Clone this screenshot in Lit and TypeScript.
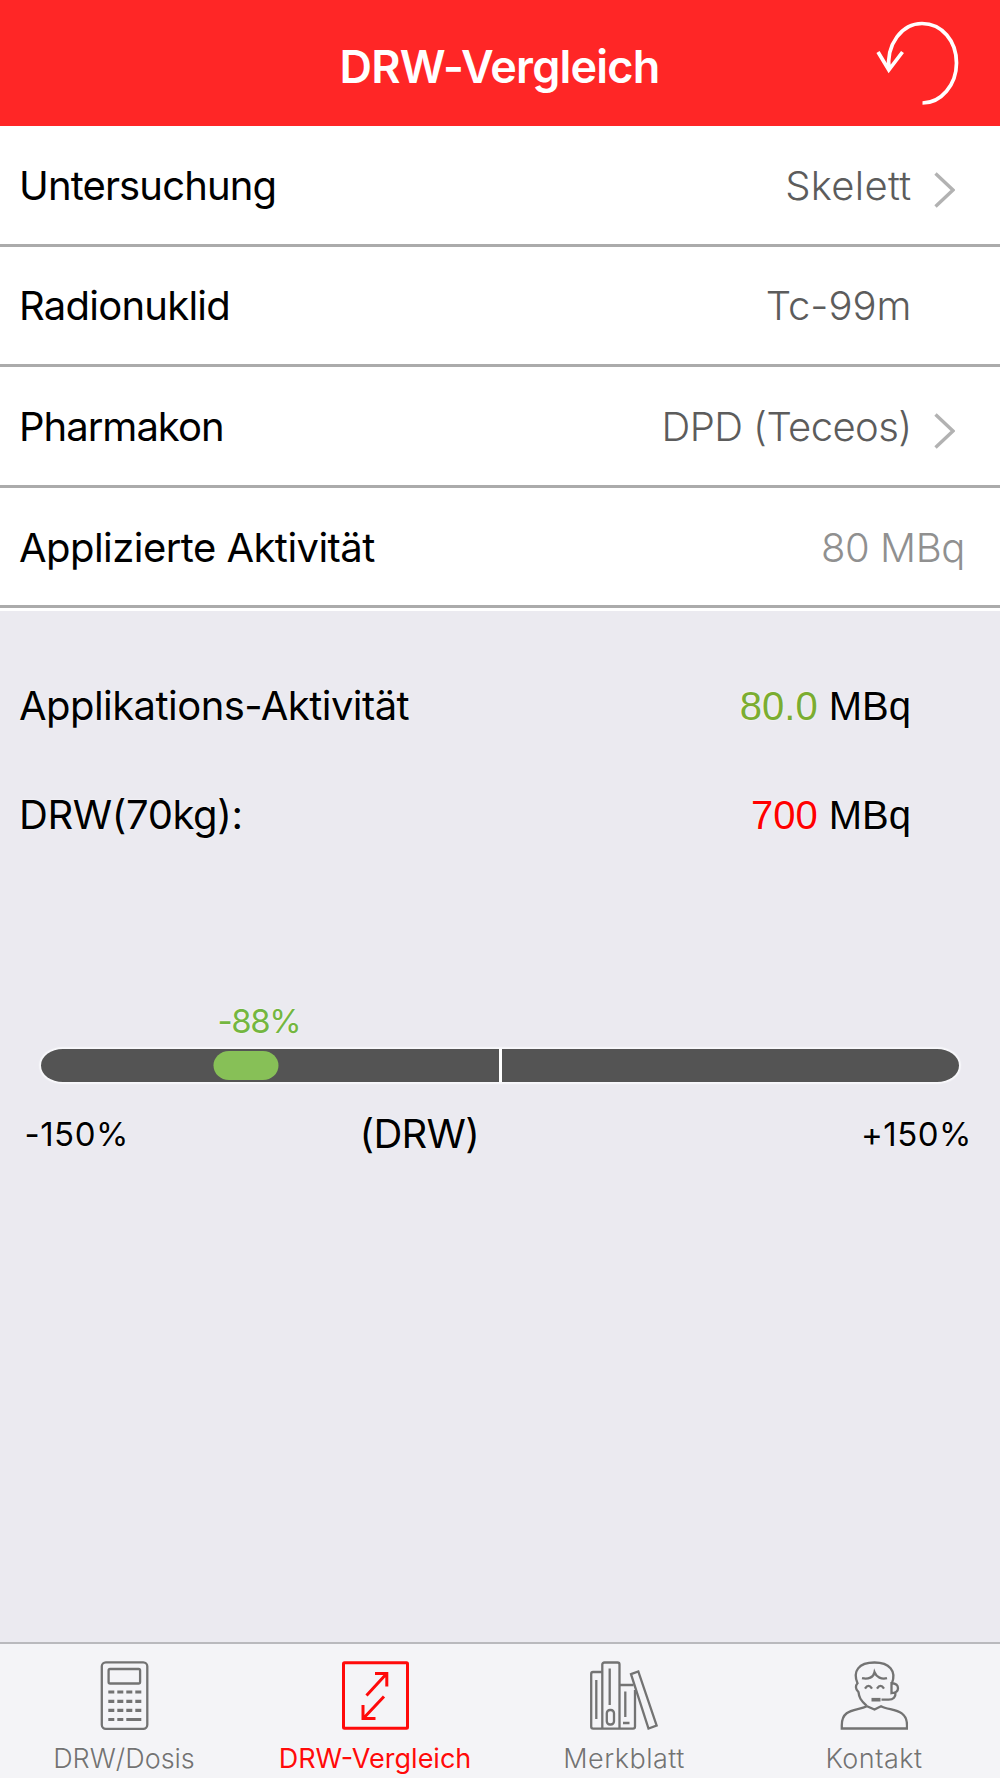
import { LitElement, html, svg, css } from "lit";
import { customElement, property } from "lit/decorators.js";

const icons: Record<string, unknown> = {
  calculator: svg`
    <g transform="translate(1 0)">
      <rect x="10.8" y="1.3" width="45.5" height="66.5" rx="4"/>
      <rect x="17.6" y="8" width="31.5" height="14.5" rx="1.5"/>
      <path stroke-width="3.2" d="M17.3 31h6M26.3 31h6M35.3 31h6M44.3 31h6M17.3 40.3h6M26.3 40.3h6M35.3 40.3h6M44.3 40.3h6M17.3 49.3h6M26.3 49.3h6M35.3 49.3h6M44.3 49.3h6M17.3 58.5h6M26.3 58.5h6M35.3 58.5h15"/>
    </g>`,
  compare: svg`
    <rect stroke-width="3" x="2.5" y="1.8" width="64" height="65.5" rx="1"/>
    <path stroke-width="3" d="M25.5 34.5 45.5 12.8M34 12.5H45.8V25.5M43 35.5 22.5 57.2M22 44V57.4H34.5"/>`,
  books: svg`
    <path d="M12.3 11H3Q1.2 11 1.2 13V65.5Q1.2 67.6 3.2 67.6H43Q45 67.6 45 65.5V29"/>
    <path d="M12.3 67V3.5Q12.3 1.5 14.5 1.5H27.5Q29.5 1.5 29.5 3.500V67M29.5 24H43.5"/>
    <path d="M41 13.2 48.3 10.5 66.6 64.500 58.500 67.500Z"/>
    <path d="M6.3 19V58M19.700 7.500V44M35.300 30.500V56M33 62H39.5"/>
    <rect x="16.800" y="49" width="7.200" height="14.500" rx="3.200"/>`,
  support: svg`
    <g transform="translate(0.5 0.2)">
      <path d="M26 44.500C20 39 18.500 36 18 31C14.500 28 15 24 17 22C12 10 18 1.300 34 1.300C49 1.300 56 10 51.500 22"/>
      <path d="M21.500 17C28 18.500 33 16 34 11C36 16 41 18.500 46.500 17"/>
      <path d="M24.500 27.500Q28 22 31.500 27.500M36.500 27.500Q40 22 43.500 27.500"/>
      <path d="M51 22Q57.500 22.500 57.500 27T51 32ZM55 31Q55.500 38.500 48 38.500H41"/>
      <path stroke-width="3.600" d="M31 38.500H40"/>
      <path d="M26.500 45C16 50 1.300 47 1.300 64V67.300H66.500V64C66.500 47 50 50 40.500 45L34 48.300L26.500 45Z"/>
    </g>`,
};

@customElement("setting-row")
class SettingRow extends LitElement {
  @property() label = "";
  @property() value = "";
  @property({ type: Boolean }) chevron = false;
  @property({ type: Boolean }) input = false;

  static styles = css`
    :host { display: block; height: 120.6px; box-sizing: border-box; border-bottom: 3px solid #ababab; background: #fff; }
    .row { display: flex; align-items: center; height: 100%; box-sizing: border-box; padding: 2px 45.5px 0 19px; font-size: 40px; line-height: 48px; white-space: nowrap; }
    .label { flex: 1; color: #000; letter-spacing: var(--label-spacing, -0.8px); }
    .value { color: #5c5c5c; font-weight: 300; letter-spacing: var(--value-spacing, 0); }
    .input { color: #909090; margin-right: -10.5px; }
    .accessory { width: 43px; height: 36px; display: flex; align-items: center; justify-content: flex-end; padding-top: 8px; }
    .input + .accessory { display: none; }
    svg { fill: none; stroke: #b2b2b2; stroke-width: 3.4; }
  `;

  render() {
    return html`<div class="row">
      <span class="label">${this.label}</span>
      <span class="value ${this.input ? "input" : ""}">${this.value}</span>
      <span class="accessory">${this.chevron
        ? html`<svg width="21" height="36" viewBox="0 0 21 36"><path d="M1.5 1.5 19 18 1.5 34.5"/></svg>`
        : null}</span>
    </div>`;
  }
}

@customElement("app-root")
class AppRoot extends LitElement {
  private percent = -88;
  private tabs = [
    { id: "dosis", label: "DRW/Dosis", icon: "calculator" },
    { id: "vergleich", label: "DRW-Vergleich", icon: "compare" },
    { id: "merkblatt", label: "Merkblatt", icon: "books" },
    { id: "kontakt", label: "Kontakt", icon: "support" },
  ];

  static styles = css`
    :host { display: flex; flex-direction: column; width: 1000px; height: 1778px; background: #ebeaf0; font-family: Inter, "Liberation Sans", sans-serif; color: #000; overflow: hidden; }
    header { display: grid; grid-template-columns: 1fr auto 1fr; align-items: center; height: 126px; background: #ff2626; color: #fff; flex: none; }
    h1 { grid-column: 2; margin: 7px 1px 0 0; font-size: 45px; line-height: 56px; font-weight: 600; letter-spacing: -0.8px; white-space: nowrap; }
    .undo { justify-self: end; margin-right: 40px; display: block; fill: none; stroke: #fff; stroke-width: 3.7; }
    .settings { background: #fff; padding-bottom: 2.6px; flex: none; }
    .untersuchung { --label-spacing: -0.87px; --value-spacing: 0.3px; }
    .radionuklid { --label-spacing: -0.75px; }
    .pharmakon { --label-spacing: -1px; --value-spacing: -0.6px; }
    .aktivitaet { --label-spacing: -0.55px; --value-spacing: -0.4px; }
    main { flex: 1; padding-top: 40px; text-shadow: 0 0 2px #fff; }
    .result { display: flex; align-items: center; justify-content: space-between; height: 109.5px; padding: 0 89px 0 19px; font-size: 40px; line-height: 48px; white-space: nowrap; }
    .l1 { letter-spacing: -0.55px; }
    .l2 { letter-spacing: -0.4px; }
    .figure { font-family: "Liberation Sans", Arial, sans-serif; }
    .green { color: #7bad31; }
    .red { color: #f00; }
    .gauge { margin: 131.5px 41px 0; }
    .marker-label { display: block; width: 86px; margin-left: 176.5px; font-size: 33px; line-height: 40px; letter-spacing: -1.4px; color: #74b640; white-space: nowrap; }
    .track { position: relative; margin-top: 8px; height: 32.5px; border-radius: 22px / 16.25px; background: #545454; box-shadow: 0 0 1px 2px #f8f8fb; }
    .marker { position: absolute; top: 1.5px; height: 29.5px; width: 65px; border-radius: 16px / 15px; background: #87c057; transform: translateX(-50%); }
    .zero { position: absolute; left: 457.5px; top: 0; width: 3px; height: 100%; background: #fff; }
    .scale { display: grid; grid-template-columns: 335px 1fr auto; align-items: center; margin: 28px 28px 0 24.5px; font-size: 33px; line-height: 48px; letter-spacing: 0.5px; white-space: nowrap; }
    .mid { font-size: 40px; letter-spacing: -0.7px; }
    nav { display: grid; grid-template-columns: repeat(4, 250px); height: 136.5px; box-sizing: border-box; border-top: 2.5px solid #b9b9bd; background: #f4f4f7; flex: none; }
    .tab { display: flex; flex-direction: column; align-items: center; padding: 17px 2px 0 0; font-size: 27px; line-height: 32px; text-shadow: 0 0 2px #fff; white-space: nowrap; color: #737373; }
    .tab svg { display: block; margin-bottom: 13px; fill: none; stroke: currentColor; stroke-width: 2.3; }
    .tab span { font-weight: 300; }
    .t-merkblatt span, .t-kontakt span { letter-spacing: 0.5px; }
    .active { color: #ff0a0a; padding-right: 0; }
    .active span { font-weight: 400; }
  `;

  render() {
    const pos = 204.5 + (this.percent + 88) * 2.8;
    return html`
      <header>
        <h1>DRW-Vergleich</h1>
        <svg class="undo" width="86" height="90" viewBox="874 18 86 90"><path d="M889 70C886 44 902 23.5 922 23.5C942 23.5 956.5 41 956.5 63C956.5 85 941 103 922.5 103M878 52 888.8 70 902.5 52"/></svg>
      </header>
      <section class="settings">
        <setting-row class="untersuchung" label="Untersuchung" value="Skelett" chevron></setting-row>
        <setting-row class="radionuklid" label="Radionuklid" value="Tc-99m"></setting-row>
        <setting-row class="pharmakon" label="Pharmakon" value="DPD (Teceos)" chevron></setting-row>
        <setting-row class="aktivitaet" label="Applizierte Aktivität" value="80 MBq" input></setting-row>
      </section>
      <main>
        <div class="result"><span class="l1">Applikations-Aktivität</span><span class="figure"><span class="green">80.0</span> MBq</span></div>
        <div class="result"><span class="l2">DRW(70kg):</span><span class="figure"><span class="red">700</span> MBq</span></div>
        <div class="gauge">
          <span class="marker-label">${this.percent}%</span>
          <div class="track"><span class="marker" style="left:${pos}px"></span><span class="zero"></span></div>
        </div>
        <div class="scale"><span>-150%</span><span class="mid">(DRW)</span><span>+150%</span></div>
      </main>
      <nav>
        ${this.tabs.map((t) => html`<div class="tab t-${t.id} ${t.id === "vergleich" ? "active" : ""}">
          <svg width="68" height="69" viewBox="0 0 68 69">${icons[t.icon]}</svg><span>${t.label}</span>
        </div>`)}
      </nav>
    `;
  }
}
